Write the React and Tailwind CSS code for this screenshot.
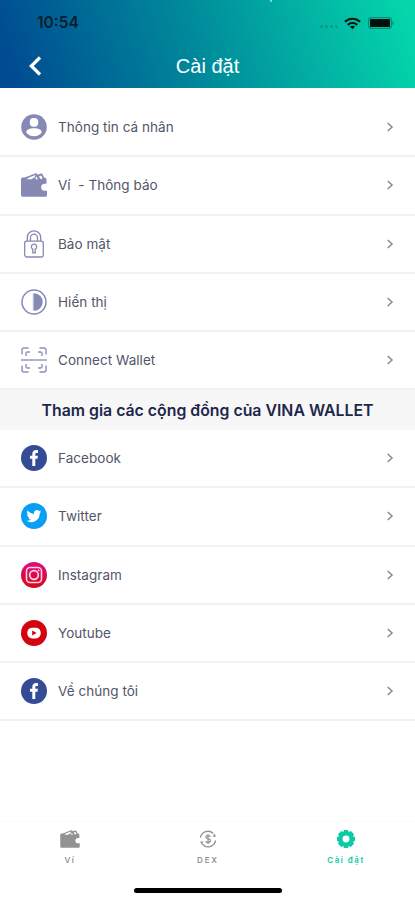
const Wallet = ({ className }) => (
  <svg viewBox="0 0 26 24" className={className}>
    <path d="M2 4.600h1.500l10.800-4.200c.9-.3 1.500-.1 1.900.6l.5.800 3.300-1.200c.8-.2 1.300 0 1.600.7l1.500 3.300c1.600 0 2.400.8 2.400 2.400v3.800h-1.800a3.500 3.500 0 0 0 0 7h2.300V22c0 1.200-.6 1.800-1.800 1.800H1.900C.7 23.800 0 23.100 0 22V6.600c0-1.300.7-2 2-2Z" fill="currentColor" />
    <path d="M5.500 6.200 8 4.400l6.500-2.500-.7 2.300-3.600 2ZM15.500 3.500l1.500 2.700h-2.800ZM18 3.300l2.300-.8 1.300 3.300-2.300.3Z" fill="#fff" />
  </svg>
);

const Profile = () => (
  <svg viewBox="0 0 26 26" className="size-[26px]">
    <circle cx="13" cy="13" r="12.800" fill="#8689b4" />
    <rect x="8.800" y="3.900" width="8.400" height="8.800" rx="3.700" fill="#fff" />
    <path d="M5.200 18.500c0-3 3.500-4.300 7.800-4.300s7.800 1.300 7.800 4.300c-1.600 2.400-4.500 3.800-7.800 3.800s-6.200-1.400-7.800-3.800Z" fill="#fff" />
  </svg>
);

const Lock = () => (
  <svg viewBox="0 0 26 28" className="h-7 w-[26px]" fill="none" stroke="#8689b4" strokeWidth="1.300">
    <rect x="3.700" y="11.200" width="18.600" height="15.800" rx="2.200" />
    <path d="M6.300 11V7.500a6.700 6.700 0 0 1 13.400 0V11M9.500 11V7.700a3.500 3.500 0 0 1 7 0V11" />
    <path d="M11.800 19.200a2.700 2.700 0 1 1 2.400 0v3.600h-2.400Z" />
  </svg>
);

const Contrast = () => (
  <svg viewBox="0 0 26 26" className="size-[26px]">
    <circle cx="13" cy="13" r="12" fill="none" stroke="#8689b4" strokeWidth="1.500" />
    <path d="M13 4.300a8.700 8.700 0 0 1 0 17.400Z" fill="#8689b4" />
    <path d="M12.300 4.500v17" stroke="#a9abcb" />
  </svg>
);

const Scan = () => (
  <svg viewBox="0 0 26 26" className="size-[26px]" fill="none" stroke="#8f92b8" strokeWidth="1.400">
    <path d="M1 7.500V3q0-2 2-2h4.500M18.500 1H23q2 0 2 2v4.500M1 18.500V23q0 2 2 2h4.500M25 18.500V23q0 2-2 2h-4.500" />
    <path d="M5 9V6.500Q5 5 6.500 5H9M17 5h2.500Q21 5 21 6.500V9M5 17v2.500Q5 21 6.500 21H9M21 17v2.500q0 1.500-1.500 1.500H17" />
    <path d="M0 13h26" strokeWidth="2" stroke="#b0b2ce" />
  </svg>
);

const Facebook = () => (
  <svg viewBox="0 0 26 26" className="size-[26px]">
    <circle cx="13" cy="13" r="13" fill="#344b95" />
    <path d="M11.300 21v-7.300H9v-3h2.300V9c0-2.700 1.500-4 3.800-4 .8 0 1.500.1 1.900.2v2.700h-1.300c-1.100 0-1.400.5-1.400 1.400v1.400h2.600l-.4 3h-2.200V21Z" fill="#fff" />
  </svg>
);

const Twitter = () => (
  <svg viewBox="0 0 26 26" className="size-[26px]">
    <circle cx="13" cy="13" r="13" fill="#079ff5" />
    <path transform="translate(5.500 5.700) scale(.62)" fill="#fff" d="M24 4.600c-.9.400-1.800.7-2.800.8 1-.6 1.800-1.600 2.200-2.700-1 .6-2 1-3.100 1.200a4.900 4.900 0 0 0-8.400 4.500C7.700 8.100 4.100 6.100 1.700 3.100a4.900 4.900 0 0 0 1.500 6.600c-.8 0-1.600-.3-2.200-.6v.1c0 2.300 1.700 4.400 3.900 4.800-.7.200-1.500.2-2.200.1.600 2 2.400 3.400 4.600 3.400A9.900 9.900 0 0 1 0 19.500 14 14 0 0 0 21.500 7.100c1-.7 1.800-1.600 2.500-2.500Z" />
  </svg>
);

const Instagram = () => (
  <svg viewBox="0 0 26 26" className="size-[26px]" fill="none" stroke="#ffd3df">
    <defs>
      <linearGradient id="insta" x1="0" y1="0" x2="0" y2="1">
        <stop offset="0" stopColor="#df0b85" />
        <stop offset="1" stopColor="#d40a18" />
      </linearGradient>
    </defs>
    <circle cx="13" cy="13" r="13" fill="url(#insta)" stroke="none" />
    <rect x="5.500" y="5.500" width="15" height="15" rx="3.500" strokeWidth="1.600" />
    <circle cx="13" cy="13" r="4.300" strokeWidth="1.700" />
    <circle cx="17.600" cy="8.400" r=".9" fill="#ffd3df" stroke="none" />
  </svg>
);

const Youtube = () => (
  <svg viewBox="0 0 26 26" className="size-[26px]">
    <circle cx="13" cy="13" r="13" fill="#d3030f" />
    <rect x="6.300" y="7.800" width="13.400" height="10.600" rx="4.800" fill="#fff" />
    <path d="m11.200 10.600 4.500 2.500-4.500 2.500Z" fill="#d3030f" />
  </svg>
);

const Row = ({ icon, label }) => (
  <div className="flex h-[58.300px] items-center border-b-2 border-[#f1f1f2] px-[21px]">
    <div className="flex w-[26px] justify-center">{icon}</div>
    <span className="ml-[11px] flex-1 text-[13.500px] tracking-[0.040px] whitespace-pre text-[#51566a]">{label}</span>
    <svg viewBox="0 0 8 12" className="h-3 w-2" fill="none" stroke="#858a9b" strokeWidth="1.500">
      <path d="m1.700 2 4.300 4-4.300 4" />
    </svg>
  </div>
);

const Header = () => (
  <header className="relative h-[88px] bg-[linear-gradient(72deg,#004b91_3%,#008b9b_48%,#04d5ab_97%)]">
    <span className="absolute top-0 left-[270px] h-[2px] w-[2px] rounded-b-full bg-[#8bdcd6]" />
    <div className="flex h-[46px] items-center pr-[20px] pl-[37px]">
      <span className="flex-1 text-[15.500px] font-semibold text-[#04202f]">10:54</span>
      <span className="mt-[7px] mr-[6px] flex gap-[2px]">
        <i className="size-[3px] rounded-full bg-[#079b87]" />
        <i className="size-[3px] rounded-full bg-[#079b87]" />
        <i className="size-[3px] rounded-full bg-[#079b87]" />
        <i className="size-[3px] rounded-full bg-[#079b87]" />
      </span>
      <svg viewBox="0 0 18 13" className="mr-[7px] h-[13px] w-[17px]" fill="none" stroke="#02120f" strokeWidth="2.300">
        <path d="M1 4.700c4.500-4.300 11.500-4.300 16 0M4 8c2.900-2.700 7.100-2.700 10 0" />
        <path d="m9 12.500-2.700-2.700c1.500-1.200 3.900-1.200 5.400 0Z" fill="#02120f" stroke="none" />
      </svg>
      <svg viewBox="0 0 27 12" className="h-3 w-[27px]">
        <rect x=".6" y=".6" width="22.800" height="10.800" rx="2.300" fill="none" stroke="#078f78" strokeWidth="1.300" />
        <rect x="2" y="2" width="20" height="8" rx=".6" fill="#00110c" />
        <path d="M24.500 4c2 .7 2 3.300 0 4Z" fill="#078f78" />
      </svg>
    </div>
    <div className="grid h-[40px] grid-cols-[1fr_auto_1fr] items-center text-white">
      <svg viewBox="0 0 14 20" className="ml-[28px] h-5 w-[14px]" fill="none" stroke="currentColor" strokeWidth="3.200">
        <path d="m12 1.500-8.700 8.500 8.700 8.500" />
      </svg>
      <h1 className="font-['Liberation_Sans',sans-serif] text-[20px]">Cài đặt</h1>
    </div>
  </header>
);

const TabBar = () => (
  <nav className="grid h-[58px] grid-cols-3 border-t border-[#fafafa] pl-px text-[8px] font-semibold tracking-[1.500px] text-[#929292]">
    <div className="flex flex-col items-center pt-[8px]">
      <Wallet className="mb-[6px] h-[18px] w-5" />
      <span className="leading-[12px]">Ví</span>
    </div>
    <div className="flex flex-col items-center pt-[8px]">
      <svg viewBox="0 0 20 20" className="mb-[6px] h-[18px] w-5" fill="none" stroke="currentColor" strokeWidth="1.500">
        <path d="M1.600 8.500A8.500 8.500 0 0 1 15.800 3.800M3.400 15.500a8.500 8.500 0 0 0 15-4" />
        <path d="M1.200 12.700h3.800l-2 3.500ZM18.800 7.500H15l2.300-3.600Z" fill="currentColor" stroke="none" />
        <path d="M12.600 7.400c-.5-.9-1.400-1.200-2.600-1.200-3.300 0-3.300 3.300 0 3.600 3.700.3 3.500 4 0 4-1.400 0-2.300-.5-2.800-1.400M10 4.500v11" strokeWidth="1.300" />
      </svg>
      <span className="leading-[12px] tracking-[1.900px]">DEX</span>
    </div>
    <div className="flex flex-col items-center pt-[8px] text-[#0acba4]">
      <svg viewBox="0 0 20 20" className="mb-[6px] h-[18px] w-[18px]" fill="currentColor">
        <path fillRule="evenodd" d="M7.800 0h4.400l.8 2.200 2.300-1.100 3.600 3.600-1.100 2.300 2.200.8v4.400l-2.200.8 1.100 2.300-3.600 3.600-2.300-1.100-.8 2.200H7.800L7 17.800l-2.300 1.100-3.600-3.600L2.200 13 0 12.200V7.800L2.200 7 1.100 4.700l3.600-3.600L7 2.200ZM10 6.200a3.800 3.800 0 1 0 0 7.600 3.800 3.800 0 0 0 0-7.600Z" />
      </svg>
      <span className="leading-[12px]">Cài đặt</span>
    </div>
  </nav>
);

export default function App() {
  return (
    <div className="flex h-[900px] w-[415px] flex-col overflow-hidden bg-white font-['Inter',sans-serif]">
      <Header />
      <main className="flex-1">
        <div className="pt-[11px]">
          <Row icon={<Profile />} label="Thông tin cá nhân" />
          <Row icon={<Wallet className="h-6 w-[26px] text-[#8689b4]" />} label="Ví  - Thông báo" />
          <Row icon={<Lock />} label="Bảo mật" />
          <Row icon={<Contrast />} label="Hiển thị" />
          <Row icon={<Scan />} label="Connect Wallet" />
        </div>
        <h2 className="flex h-[39.500px] items-center justify-center bg-[#f7f7f8] pt-[1.500px] text-[15.850px] font-semibold text-[#1e2749]">
          Tham gia các cộng đồng của VINA WALLET
        </h2>
        <Row icon={<Facebook />} label="Facebook" />
        <Row icon={<Twitter />} label="Twitter" />
        <Row icon={<Instagram />} label="Instagram" />
        <Row icon={<Youtube />} label="Youtube" />
        <Row icon={<Facebook />} label="Về chúng tôi" />
      </main>
      <TabBar />
      <div className="flex h-[21px] justify-center pt-[9px]">
        <div className="h-[5px] w-[148px] rounded-full bg-black" />
      </div>
    </div>
  );
}
